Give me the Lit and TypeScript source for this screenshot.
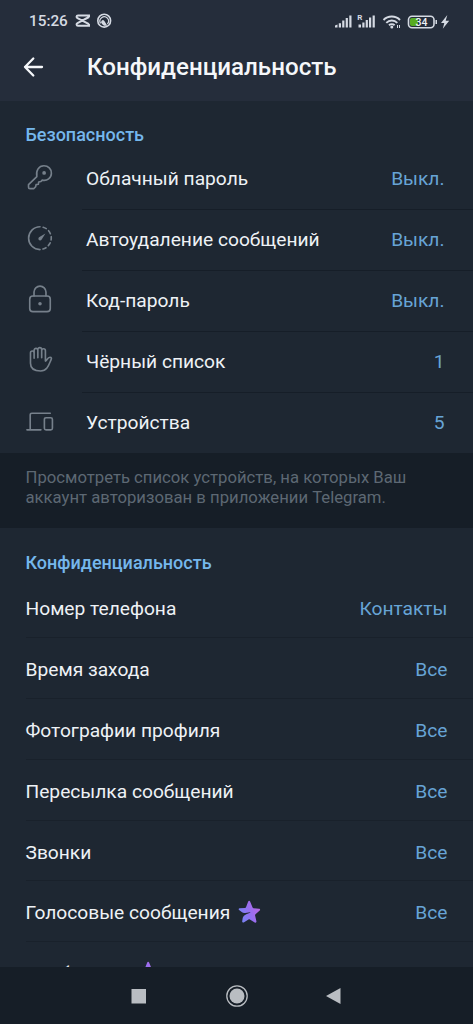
import { LitElement, html, css, svg, nothing, TemplateResult } from "lit";
import { customElement, property } from "lit/decorators.js";

interface Row {
  label: string;
  value: string;
  icon?: string;
  premium?: boolean;
}

const SECURITY: Row[] = [
  { label: "Облачный пароль", value: "Выкл.", icon: "key" },
  { label: "Автоудаление сообщений", value: "Выкл.", icon: "timer" },
  { label: "Код-пароль", value: "Выкл.", icon: "lock" },
  { label: "Чёрный список", value: "1", icon: "hand" },
  { label: "Устройства", value: "5", icon: "devices" },
];

const PRIVACY: Row[] = [
  { label: "Номер телефона", value: "Контакты" },
  { label: "Время захода", value: "Все" },
  { label: "Фотографии профиля", value: "Все" },
  { label: "Пересылка сообщений", value: "Все" },
  { label: "Звонки", value: "Все" },
  { label: "Голосовые сообщения", value: "Все", premium: true },
  { label: "Сообщения", value: "Все", premium: true },
];

const ICONS: Record<string, TemplateResult> = {
  key: svg`<path d="M11.600 14.600C10.400 8 13.800 3 19.200 3c4.700 0 8 3.500 8 7.900 0 5.200-4.600 8.600-9.800 7.400l-1.400 1.500-2.400.5-.4 2.500-2.400.4-.5 2.200-1.800 2H4.200c-1 0-1.500-.5-1.500-1.500v-2.700z"/><circle class="fill" cx="19.400" cy="10.700" r="2"/>`,
  timer: svg`<path d="M15 3a12.200 12.200 0 1 0 0 24.400"/><path d="M18.400 3.500a12.200 12.200 0 0 1 3.300 1.500M24.200 7.200a12.200 12.200 0 0 1 1.900 3.200M27 13.600a12.200 12.200 0 0 1-.1 3.400M25.900 20.200a12.200 12.200 0 0 1-2 3M21.400 25.400a12.200 12.200 0 0 1-3.200 1.400"/><path class="fill" d="M20.800 10.200l-4 6.400c-.8 1.400-2.600 1.200-3.200.3-.6-1-.3-2.200.8-2.900z"/>`,
  lock: svg`<rect x="4" y="11.800" width="22" height="16.700" rx="3.400"/><path d="M8.600 11.800V7.600a6.400 6.400 0 0 1 12.800 0v4.200"/><circle class="fill" cx="15" cy="20" r="1.900"/>`,
  hand: svg`<path d="M4.800 18.500V7.400c0-2.700 3.900-2.700 3.900 0V13M8.700 12V4.600c0-2.700 4-2.700 4 0V12.500M12.700 11V3.700c0-2.700 4.100-2.700 4.100 0V12.500M16.800 5c0-2.700 4-2.700 4 0v11.200c1.700-.8 2.200-4.200 4.900-4.200 1.700 0 1.800 1.300 1.200 2.500-2.200 4.700-3.700 12.300-11.200 12.300C8.500 26.800 4.800 23.500 4.800 18.500"/>`,
  devices: svg`<path d="M1 24.500h15M4.500 24.500V8.500c0-1.200.6-1.800 1.800-1.800H26"/><rect x="19.700" y="11.500" width="8.600" height="13" rx="1.800"/>`,
};

@customElement("settings-icon")
export class SettingsIcon extends LitElement {
  static styles = css`
    :host { display: block; width: 28px; height: 28px; }
    .icon {
      display: block; width: 28px; height: 28px; fill: none; stroke: #76808b;
      stroke-width: 1.750; stroke-linecap: round; stroke-linejoin: round;
    }
    .fill { fill: #76808b; stroke: none; }
  `;
  @property() name = "";
  render() {
    return html`<svg class="icon" viewBox="0 0 30 30">${ICONS[this.name]}</svg>`;
  }
}

@customElement("premium-star")
export class PremiumStar extends LitElement {
  static styles = css`
    :host { display: block; width: 24px; height: 24px; }
    .star { display: block; width: 24px; height: 24px; }
  `;
  render() {
    return html`<svg class="star" viewBox="0 0 24 24">
      <defs>
        <linearGradient id="g" x1="0" y1="0.700" x2="1" y2="0.300">
          <stop offset="0" stop-color="#7486f4" />
          <stop offset="0.500" stop-color="#956ff0" />
          <stop offset="1" stop-color="#bd68e4" />
        </linearGradient>
      </defs>
      <path fill="url(#g)" d="M11.200 1.500c.4-1 1.500-1 1.900 0l2.500 6.100c.2.500.5.700 1 .7l5.400.4c1.200.1 1.500 1.200.7 1.900l-4.200 3.700c-.4.400-.5.700-.4 1.200l1.300 5.700c.3 1.200-.7 1.900-1.700 1.200l-4.800-2.900c-.5-.3-.9-.3-1.400 0l-4.800 2.900c-.9.500-1.800-.1-1.500-1.200l.5-3.200c.6-2 1.700-2.900 3.600-3.700l3.800-1.600c.3-.2.200-.5-.1-.4l-4.700.6c-1.500.2-2.600-.1-3.600-.9l-2.600-2c-.8-.7-.4-1.600.6-1.700l5.300-.4c.5 0 .8-.3 1-.7z" />
    </svg>`;
  }
}

@customElement("settings-row")
export class SettingsRow extends LitElement {
  static styles = css`
    :host { display: block; flex: none; }
    .row { display: flex; height: 60.900px; padding-left: 25.500px; }
    .row.tall { height: 61px; }
    .lead { width: 56.500px; flex: none; padding-top: 14px; box-sizing: border-box; }
    .body {
      flex: 1; display: flex; align-items: center; justify-content: space-between;
      box-sizing: border-box; padding: 4px 25.500px 0 0; border-bottom: 1px solid #19212b;
      font-size: 19.200px; line-height: 24px; color: #eef2f6; white-space: nowrap;
    }
    .indent { padding: 0 28.500px 1px 4px; border-bottom-color: #161e28; }
    .last { border-bottom-color: transparent; }
    .label { display: flex; align-items: center; gap: 7px; }
    .value { color: #67a4d6; }
    .star { margin-bottom: 3px; }
  `;
  @property({ attribute: false }) row!: Row;
  @property({ type: Boolean }) last = false;
  render() {
    const { label, value, icon, premium } = this.row;
    return html`<div class="row ${icon ? "tall" : ""}">
      ${icon ? html`<div class="lead"><settings-icon name=${icon}></settings-icon></div>` : nothing}
      <div class="body ${icon ? "indent" : ""} ${this.last ? "last" : ""}">
        <span class="label">${label}${premium ? html`<premium-star class="star"></premium-star>` : nothing}</span>
        <span class="value">${value}</span>
      </div>
    </div>`;
  }
}

@customElement("status-bar")
export class StatusBar extends LitElement {
  static styles = css`
    :host { display: block; height: 41px; flex: none; }
    .bar { display: flex; justify-content: space-between; align-items: center; height: 41px; padding: 0 22px 0 29px; }
    .side { display: flex; align-items: center; }
    .time { font-size: 15.300px; font-weight: 500; color: #d5dae3; margin-right: 7px; }
    .glyph { display: block; fill: none; stroke: #d5dae3; }
    .left { margin-left: -1px; }
    .solid { fill: #d5dae3; stroke: none; }
    .charge { fill: #57ab22; stroke: none; }
    .num { fill: #eef1f5; stroke: none; font: 500 10.500px Roboto, sans-serif; }
    .sim { fill: #d5dae3; stroke: none; font: 700 8px Roboto, sans-serif; }
  `;
  render() {
    return html`<div class="bar">
      <div class="side">
        <span class="time">15:26</span>
        <svg class="glyph left" width="38" height="16" viewBox="0 0 38 16">
          <path d="M15 4.200V2.500H4c-1.800 0-1.800 2-.5 2.700L15 11.200M15 11v1.800H4c-1.800 0-1.800-2-.5-2.700L15 4" stroke-width="2" />
          <circle cx="30.200" cy="7.700" r="6.400" stroke-width="1.600" />
          <path d="M26.600 10.400a4.300 4.300 0 1 1 6.800.6" stroke-width="1.200" />
          <path class="solid" d="M27 9.200c1-3 2.700-3 4-.2l2.300 3.700c-2.700.6-5.200-.6-6.300-3.500z" />
        </svg>
      </div>
      <svg class="glyph" width="117" height="18" viewBox="0 0 117 18">
        <path class="solid" d="M1 15.500v-2l2.500-1v3zM4.800 15.500v-4.200H7v4.200zM8.200 15.500V8.500h2.200v7zM11.700 15.500V6h2.200v9.500zM15.300 15.500V3.500h2.200v12zM24.500 15.500v-3H27v3zM28.300 15.500v-5h2.200v5zM31.700 15.500V8h2.200v7.500zM35 15.500V5.500h2.200v10zM38.600 15.500V3.500h2.200v12z" />
        <text class="sim" x="23.200" y="8.400">R</text>
        <path d="M49.500 8a11.500 11.500 0 0 1 16.500 0M52.300 10.800a7.600 7.600 0 0 1 11 0M55 13.300a4 4 0 0 1 5.600 0" stroke-width="1.900" />
        <circle class="solid" cx="57.800" cy="15" r="1.500" />
        <path d="M63.500 13v3M65.500 13v3" stroke-width="1" />
        <rect x="74.500" y="4.200" width="25.500" height="11.600" rx="3.500" stroke-width="1.600" />
        <path class="charge" d="M78 6h6v8h-6c-1.200 0-2-.8-2-2V8c0-1.200.8-2 2-2z" />
        <text class="num" x="81.500" y="13.700">34</text>
        <path class="solid" d="M101.500 8h1.500v4h-1.500zM113.300 3l-6.300 8h3.300l-1.500 5.700 6.400-8h-3.500z" />
      </svg>
    </div>`;
  }
}

@customElement("app-root")
export class AppRoot extends LitElement {
  static styles = css`
    :host { display: block; }
    .screen {
      display: flex; flex-direction: column; height: 1024px; overflow: hidden;
      background: #1e2732; font-family: Roboto, sans-serif;
    }
    .top { flex: none; height: 101px; background: #252d3b; }
    .title-bar { display: flex; align-items: center; height: 52px; padding-left: 23px; }
    .back { display: block; width: 22px; height: 22px; margin-right: 42px; fill: none; stroke: #f5f7fa; stroke-width: 2.300; stroke-linecap: round; stroke-linejoin: round; }
    .title { margin: 0; font-size: 24.150px; line-height: 30px; font-weight: 500; color: #f5f7fa; white-space: nowrap; }
    .content { flex: 1; min-height: 0; overflow: hidden; display: flex; flex-direction: column; }
    .heading {
      flex: none; margin: 0; height: 48px; box-sizing: border-box; padding: 23px 25.500px 0;
      font-size: 18px; line-height: 22px; font-weight: 500; color: #75b7ec;
    }
    .second { height: 49px; padding-top: 24px; }
    .note {
      flex: none; height: 75px; margin-top: -1px; box-sizing: border-box; padding: 15px 25.500px 0;
      background: #161e27; color: #5d6873; font-size: 16.700px; line-height: 19.500px; white-space: nowrap;
    }
    .nav { flex: none; height: 57px; background: #161e27; display: flex; justify-content: center; align-items: center; }
    .nav-icons { display: block; width: 212px; height: 24px; fill: #b9bdc2; }
    .ring { fill: none; stroke: #b9bdc2; stroke-width: 1.300; }
  `;

  render() {
    return html`<div class="screen">
      <header class="top">
        <status-bar></status-bar>
        <div class="title-bar">
          <svg class="back" viewBox="0 0 22 22"><path d="M19 11H2M10.300 2.500L2 11l8.300 8.500" /></svg>
          <h1 class="title">Конфиденциальность</h1>
        </div>
      </header>
      <main class="content">
        <h2 class="heading">Безопасность</h2>
        ${SECURITY.map((r, i) => html`<settings-row .row=${r} ?last=${i === SECURITY.length - 1}></settings-row>`)}
        <div class="note">Просмотреть список устройств, на которых Ваш<br />аккаунт авторизован в приложении Telegram.</div>
        <h2 class="heading second">Конфиденциальность</h2>
        ${PRIVACY.map((r) => html`<settings-row .row=${r}></settings-row>`)}
      </main>
      <nav class="nav">
        <svg class="nav-icons" viewBox="0 0 212 24">
          <rect x="0.500" y="5" width="14.500" height="14.500" />
          <circle cx="106" cy="12" r="7.500" />
          <circle class="ring" cx="106" cy="12" r="10.200" />
          <path d="M195 12l14.500-8v16z" />
        </svg>
      </nav>
    </div>`;
  }
}
